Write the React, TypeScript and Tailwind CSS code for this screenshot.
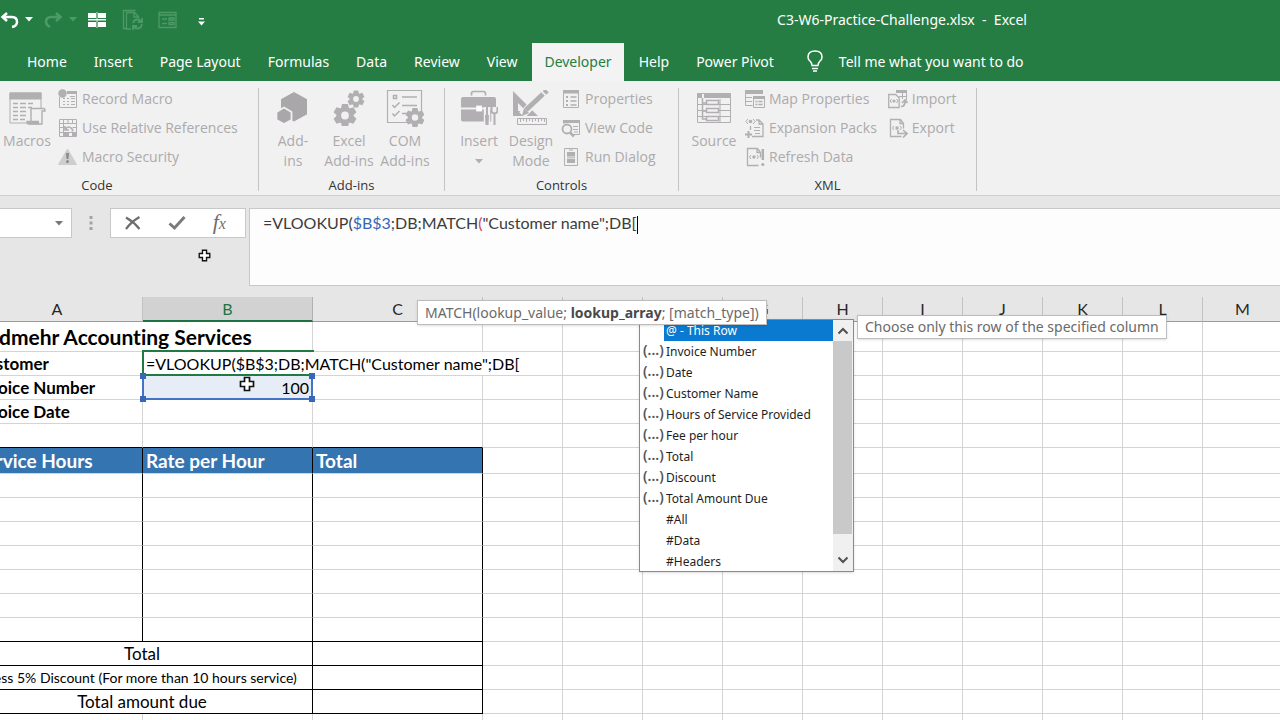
import type { ReactNode } from 'react';

const GRAY = '#b1afb1';
const PAPER = '#f1f1f1';

const TABS = ['Home', 'Insert', 'Page Layout', 'Formulas', 'Data', 'Review', 'View', 'Developer', 'Help', 'Power Pivot'];
const COLUMNS = ['A', 'B', 'C', 'D', 'E', 'F', 'G', 'H', 'I', 'J', 'K', 'L', 'M', 'N'];
const SUGGESTIONS = [
  { label: '@ - This Row', field: false },
  { label: 'Invoice Number', field: true },
  { label: 'Date', field: true },
  { label: 'Customer Name', field: true },
  { label: 'Hours of Service Provided', field: true },
  { label: 'Fee per hour', field: true },
  { label: 'Total', field: true },
  { label: 'Discount', field: true },
  { label: 'Total Amount Due', field: true },
  { label: '#All', field: false },
  { label: '#Data', field: false },
  { label: '#Headers', field: false },
];

/* ---------- icons ---------- */

function Gear({ cx, cy, r }: { cx: number; cy: number; r: number }) {
  return (
    <g transform={`translate(${cx} ${cy}) scale(${r / 10})`}>
      {[0, 60, 120, 180, 240, 300].map((a) => (
        <path key={a} d="M-2.6-10h5.2l1 4.5h-7.2z" transform={`rotate(${a})`} fill={GRAY} />
      ))}
      <circle r="5.4" fill="none" stroke={GRAY} strokeWidth="4" />
    </g>
  );
}

function MacrosIcon() {
  return (
    <svg width="38" height="36" viewBox="0 0 38 36" fill="none">
      <path d="M2 3h31v30H2z" stroke={GRAY} />
      <path d="M1.500 2.500h32v7h-32z" fill={GRAY} />
      <path d="M5 13.500h5m2 0h6m2 0h5M5 17.500h5m2 0h6m2 0h4M5 21.500h5m2 0h6M5 25.500h5m2 0h6M5 29.500h5m2 0h5" stroke={GRAY} strokeWidth="1.300" />
      <path d="M23 33V18.500h12.500q1.500 0 1.500 2.500h-3v13H21q-2 0-2-2.500h12" fill={PAPER} stroke={GRAY} strokeWidth="1.400" />
      <path d="M19 31h12v3.500H21z" fill={GRAY} />
    </svg>
  );
}

function RecordIcon() {
  return (
    <svg width="20" height="20" viewBox="0 0 20 20" fill="none">
      <path d="M1.500 8v10.500h17V3" stroke={GRAY} />
      <path d="M9 2h10v3H9z" fill={GRAY} />
      <path d="M5 9.500h2m2 0h2m2 0h4M5 12.500h2m2 0h2m2 0h4M5 15.500h2m2 0h2m2 0h4M12 7.500h5" stroke={GRAY} />
      <circle cx="4.500" cy="4.500" r="4.200" fill={GRAY} />
    </svg>
  );
}

function RelativeIcon() {
  return (
    <svg width="20" height="20" viewBox="0 0 20 20" fill="none">
      <path d="M1.500 1.500h17v17h-17zM1.500 5.500h17M1.500 9.500h5m8 0h4M1.500 14.500h17M5.500 1.500v17M10 1.500v4M14.500 1.500v4M14.500 14v4" stroke={GRAY} />
      <path d="M6.500 15v3h4v-4" fill={GRAY} stroke={GRAY} />
      <path d="M7 11.500q4-5 7.500 0v2M7 8v4h4" stroke={GRAY} strokeWidth="1.700" />
      <path d="M14 15h4v3h-4z" fill={GRAY} />
    </svg>
  );
}

function WarningIcon() {
  return (
    <svg width="20" height="20" viewBox="0 0 20 20" fill="none">
      <path d="M9.500 2 18.500 17.500H.500z" fill="#cfcdcf" stroke="#cfcdcf" strokeLinejoin="round" />
      <path d="M8 6h3l-.5 6h-2z" fill="#8c8a8c" />
      <circle cx="9.500" cy="14.600" r="1.500" fill="#8c8a8c" />
    </svg>
  );
}

function AddinsIcon() {
  return (
    <svg width="36" height="36" viewBox="0 0 36 36" stroke={PAPER}>
      <path d="M19 1.500 32.500 9v15.500L19 32 5.500 24.500V9z" fill="#a9a7a9" />
      <path d="M9 17.500 16.500 22v8L9 34 1.500 30v-8z" fill="#a9a7a9" strokeWidth="1.800" />
    </svg>
  );
}

function ExcelAddinsIcon() {
  return (
    <svg width="36" height="36" viewBox="0 0 36 36">
      <Gear cx={25} cy={9} r={8.500} />
      <Gear cx={14} cy={25.500} r={11.500} />
    </svg>
  );
}

function ComAddinsIcon() {
  return (
    <svg width="38" height="38" viewBox="0 0 38 38" fill="none">
      <path d="M1.500 1.500h34v32h-34z" stroke={GRAY} strokeWidth="1.200" />
      <path d="M7.500 6.500h3v3h-3zM16 8h15M6.500 16l2 2.500 5-5M16 16.500h15M6.500 24.500l2 2.500 5-5M16 24.500h6" stroke={GRAY} strokeWidth="1.500" />
      <circle cx="29" cy="29" r="8.500" fill={PAPER} />
      <Gear cx={29} cy={28.500} r={9.500} />
    </svg>
  );
}

function ToolboxIcon() {
  return (
    <svg width="38" height="36" viewBox="0 0 38 36" fill="none">
      <path d="M11.500 5.500V3.500q0-2 2-2h10q2 0 2 2v2" stroke={GRAY} strokeWidth="1.700" />
      <path d="M3 7h31q2 0 2 2v8.500H22v-2h-6v2H1V9q0-2 2-2z" fill={GRAY} />
      <path d="M1 19.500h15v2h6v-2h14v12H3q-2 0-2-2z" fill={GRAY} />
      <path d="M17 16.500h5v4.500h-5z" fill="#fff" />
      <path d="M27 17v19M34.500 17v19" stroke={PAPER} strokeWidth="6.500" />
      <path d="M27 17v8" stroke={GRAY} strokeWidth="2" />
      <path d="M25 25h4l-.500 10h-3z" fill={GRAY} />
      <path d="M31.500 17v4q0 2 3 2.500 3-.500 3-2.500v-4M34.500 23v12" stroke={GRAY} strokeWidth="2" />
    </svg>
  );
}

function DesignIcon() {
  return (
    <svg width="38" height="36" viewBox="0 0 38 36" fill="none">
      <path fillRule="evenodd" d="M1 1l25 25H1zM6 13v8h8z" fill={GRAY} />
      <path d="M10 25 34 1" stroke={PAPER} strokeWidth="8" />
      <path d="M14 20 31 4" stroke={GRAY} strokeWidth="5" />
      <path d="M32.500 3l2.500-2.500" stroke={GRAY} strokeWidth="5" />
      <path d="M12 18l5 5-7 3z" fill={GRAY} />
      <path d="M5.500 28.500h29v6h-29z" stroke={GRAY} fill={PAPER} />
      <path d="M8.500 29v3m3-3v2m3-2v3m3-3v2m3-2v3m3-3v2m3-2v3m3-3v2m3-2v3" stroke={GRAY} />
    </svg>
  );
}

function PropertiesIcon() {
  return (
    <svg width="20" height="20" viewBox="0 0 20 20" fill="none">
      <path d="M2.500 1.500h15v17h-15z" stroke={GRAY} />
      <path d="M2 1h16v3.500H2z" fill={GRAY} />
      <path d="M5 7h2v2H5zM5 11h2v2H5zM5 15h2v2H5z" fill={GRAY} />
      <path d="M9.500 8h6M9.500 12h6M9.500 16h6" stroke={GRAY} strokeWidth="1.300" />
    </svg>
  );
}

function ViewCodeIcon() {
  return (
    <svg width="20" height="20" viewBox="0 0 20 20" fill="none">
      <path d="M3 6V2.500h15.500v14H11" stroke={GRAY} />
      <path d="M2 2h17v3H2z" fill={GRAY} />
      <path d="M12 8.500h5m-5 3h5m-4 2.500h4" stroke={GRAY} />
      <circle cx="6" cy="11" r="4.500" stroke={GRAY} strokeWidth="1.800" fill={PAPER} />
      <path d="M9 14.500l4 4" stroke={GRAY} strokeWidth="2.500" />
    </svg>
  );
}

function RunDialogIcon() {
  return (
    <svg width="20" height="20" viewBox="0 0 20 20" fill="none">
      <path d="M3.500 1.500h13v17h-13z" stroke={GRAY} />
      <path d="M6 5h8v4.500H6zM6 12h8v4H6z" fill={GRAY} />
      <path d="M8 3h4M6 10.800h8" stroke={GRAY} />
    </svg>
  );
}

function SourceIcon() {
  return (
    <svg width="36" height="36" viewBox="0 0 36 36" fill="none">
      <path d="M1.500 3.500h33v29h-33zM24 9v24M1 14.500h33M1 20.500h33M1 26.500h33" stroke={GRAY} />
      <path d="M1 3h5v5H1zM8 3h27v5H8z" fill={GRAY} />
      <path d="M6.500 8v21H11M6.500 13H11M6.500 21H11" stroke={GRAY} strokeWidth="1.500" />
      <path d="M10.500 10.500h12v4h-12zM10.500 18.500h12v4h-12zM10.500 26.500h12v4h-12z" fill={PAPER} stroke={GRAY} strokeWidth="1.500" />
    </svg>
  );
}

function MapPropertiesIcon() {
  return (
    <svg width="20" height="20" viewBox="0 0 20 20" fill="none">
      <path d="M.500 1v15.500h7M1 8.500h6m-6 4h6" stroke={GRAY} />
      <path d="M0 1h18v4H0z" fill={GRAY} />
      <path d="M8.500 7.500h11v11h-11z" fill={PAPER} stroke={GRAY} />
      <path d="M8 7h12v3H8z" fill={GRAY} />
      <path d="M10.500 12.500h2m1 0h4m-7 3h2m1 0h4" stroke={GRAY} strokeWidth="1.500" />
    </svg>
  );
}

function ExpansionIcon() {
  return (
    <svg width="20" height="20" viewBox="0 0 20 20" fill="none">
      <path d="M11 2h3l4 4v12.500H7M5.500 8v4M14 2v4h4" stroke={GRAY} strokeWidth="1.300" />
      <path d="M9 9.500h6m-6 3h6m-5 3h5" stroke={GRAY} />
      <path d="M3 1 .800 3.500 3 6M8 1l2.200 2.500L8 6" stroke={GRAY} />
      <circle cx="5.500" cy="3.500" r="1.800" fill={GRAY} />
      <path d="M0 16.500h7M3.500 13v7" stroke={GRAY} strokeWidth="2" />
    </svg>
  );
}

function CodePage({ children }: { children?: ReactNode }) {
  return (
    <svg width="20" height="20" viewBox="0 0 20 20" fill="none">
      <path d="M12.500 1.500h-10v17h11M12.500 1.500l3 4v5M12 1.500v4h3.500" stroke={GRAY} strokeWidth="1.300" />
      <path d="M6 8 4.500 10 6 12M12 8l1.500 2L12 12" stroke={GRAY} />
      <circle cx="9" cy="10" r="1.700" fill={GRAY} />
      {children}
    </svg>
  );
}

function RefreshIcon() {
  return (
    <CodePage>
      <path d="M17.800 2v11" stroke={GRAY} strokeWidth="2.500" />
      <circle cx="17.800" cy="17.500" r="1.600" fill={GRAY} />
    </CodePage>
  );
}

function ExportIcon() {
  return (
    <CodePage>
      <path d="M10 12v3.500h8M15 12l4 3.500-4 4" stroke={GRAY} strokeWidth="1.600" />
    </CodePage>
  );
}

function ImportIcon() {
  return (
    <svg width="20" height="20" viewBox="0 0 20 20" fill="none">
      <path d="M8 1h11v3H8z" fill={GRAY} />
      <path d="M18.500 4v7M11 7.500h7M14.500 4v6" stroke={GRAY} />
      <path d="M.700 5.500h7l3.500 3.500v9.500H.700z" stroke={GRAY} strokeWidth="1.300" />
      <path d="M3.500 10 2.200 12l1.300 2M8.500 10l1.300 2-1.300 2" stroke={GRAY} />
      <circle cx="6" cy="12" r="1.600" fill={GRAY} />
      <path d="M13 17.500q4 0 4-5M14 14l3-3 2.500 3" stroke={GRAY} strokeWidth="1.700" />
    </svg>
  );
}

function CrossCursor({ size }: { size: number }) {
  return (
    <svg width={size} height={size} viewBox="0 0 16 16">
      <path d="M5.500 1.500h5v4h4v5h-4v4h-5v-4h-4v-5h4z" fill="#fff" stroke="#111" strokeWidth="1.700" />
    </svg>
  );
}

function Caret({ color }: { color: string }) {
  return (
    <svg width="8" height="5" viewBox="0 0 8 5">
      <path d="M0 0h8L4 4.500z" fill={color} />
    </svg>
  );
}

/* ---------- ribbon parts ---------- */

function SmallButton({ icon, label }: { icon: ReactNode; label: string }) {
  return (
    <button type="button" className="flex h-[29px] items-center gap-1 whitespace-nowrap">
      {icon}
      {label}
    </button>
  );
}

function BigButton({ icon, lines, className = '' }: { icon: ReactNode; lines: ReactNode[]; className?: string }) {
  return (
    <button type="button" className={'flex flex-col items-center whitespace-nowrap leading-5 ' + className}>
      <span className="flex h-[47px] items-center">{icon}</span>
      {lines.map((line, i) => (
        <span key={i} className="flex h-5 items-center">{line}</span>
      ))}
    </button>
  );
}

function Group({ name, children, className = '' }: { name: string; children: ReactNode; className?: string }) {
  return (
    <section className={'flex shrink-0 flex-col ' + className}>
      <div className="flex h-[91px] items-start">{children}</div>
      <h2 className="text-center text-[13px] leading-5 text-[#333]">{name}</h2>
    </section>
  );
}

function Divider() {
  return <div className="my-1 w-px shrink-0 bg-[#c4c4c4]" />;
}

/* ---------- sheet ---------- */

const cell = 'border-r border-b border-[#d4d4d4] p-0 px-[3px] whitespace-nowrap';
const boxed = 'border-r border-b border-r-black border-b-[#d4d4d4] p-0 px-[3px] whitespace-nowrap';
const totals = 'border-r border-b border-black p-0 px-[3px] whitespace-nowrap';

function Blanks({ count, className = cell }: { count: number; className?: string }) {
  return (
    <>
      {Array.from({ length: count }, (_, i) => (
        <td key={i} className={className} />
      ))}
    </>
  );
}

function Sheet() {
  return (
    <table className="-ml-7 w-0 table-fixed border-separate border-spacing-0 font-[Lato,sans-serif] text-[16px] leading-5 text-black [font-variant-ligatures:none]">
      <colgroup>
        {COLUMNS.map((c, i) => (
          <col key={c} className={i === 0 ? 'w-[171px]' : i < 3 ? 'w-[170px]' : 'w-20'} />
        ))}
      </colgroup>
      <thead>
        <tr className="h-[25px]">
          {COLUMNS.map((c) => (
            <th
              key={c}
              scope="col"
              className={
                c === 'B'
                  ? 'border-r border-b-2 border-r-[#b0b0b0] border-b-[#1f7244] bg-[#d2d2d2] p-0 font-normal text-[#1f7244]'
                  : 'border-r border-b border-r-[#c2c2c2] border-b-[#9b9b9b] bg-[#e6e6e6] p-0 font-normal text-[#262626]'
              }
            >
              {c}
            </th>
          ))}
        </tr>
      </thead>
      <tbody>
        <tr className="h-[30px]">
          <td colSpan={2} className={cell + ' text-[21px] font-bold'}>Radmehr Accounting Services</td>
          <Blanks count={12} />
        </tr>
        <tr className="h-6">
          <td className={cell + ' text-[17px] font-bold'}>Customer</td>
          <td colSpan={3} className={cell + ' relative'}>
            <div className="absolute -top-0.5 -left-px h-[26px] w-[172px] border-t-2 border-b-2 border-l-2 border-[#1f7a43]" />
            =VLOOKUP($B$3;DB;MATCH("Customer name";DB[
          </td>
          <Blanks count={10} />
        </tr>
        <tr className="h-6">
          <td className={cell + ' text-[17px] font-bold'}>Invoice Number</td>
          <td className={cell + ' relative bg-[#e6edf7] text-right'}>
            100
            <div className="absolute -inset-x-px top-0 -bottom-px border-x-2 border-b-2 border-[#4472c4]">
              <i className="absolute -top-[3px] -left-1 size-[6px] bg-[#3866b8]" />
              <i className="absolute -top-[3px] -right-1 size-[6px] bg-[#3866b8]" />
              <i className="absolute -bottom-1 -left-1 size-[6px] bg-[#3866b8]" />
              <i className="absolute -right-1 -bottom-1 size-[6px] bg-[#3866b8]" />
            </div>
          </td>
          <Blanks count={12} />
        </tr>
        <tr className="h-6">
          <td className={cell + ' text-[17px] font-bold'}>Invoice Date</td>
          <Blanks count={13} />
        </tr>
        <tr className="h-6">
          <Blanks count={3} className="border-r border-b border-r-[#d4d4d4] border-b-black p-0" />
          <Blanks count={11} />
        </tr>
        <tr className="h-[26px] text-[19px] font-bold text-white">
          <td className={boxed + ' bg-[#3474b0]'}>Service Hours</td>
          <td className={boxed + ' bg-[#3474b0]'}>Rate per Hour</td>
          <td className={boxed + ' bg-[#3474b0]'}>Total</td>
          <Blanks count={11} />
        </tr>
        {[0, 1, 2, 3, 4, 5].map((r) => (
          <tr key={r} className="h-6">
            <Blanks count={3} className={boxed} />
            <Blanks count={11} />
          </tr>
        ))}
        <tr className="h-6">
          <Blanks count={3} className={totals} />
          <Blanks count={11} />
        </tr>
        <tr className="h-6 text-[17px]">
          <td colSpan={2} className={totals + ' text-center'}>Total</td>
          <td className={totals} />
          <Blanks count={11} />
        </tr>
        <tr className="h-6 text-[14px]">
          <td colSpan={2} className={totals + ' text-center'}>Less 5% Discount (For more than 10 hours service)</td>
          <td className={totals} />
          <Blanks count={11} />
        </tr>
        <tr className="h-6 text-[17px]">
          <td colSpan={2} className={totals + ' text-center'}>Total amount due</td>
          <td className={totals} />
          <Blanks count={11} />
        </tr>
        <tr className="h-6">
          <Blanks count={14} />
        </tr>
      </tbody>
    </table>
  );
}

function Suggestions() {
  return (
    <div className="absolute top-[22px] left-[639px] flex h-[253px] w-[215px] border border-[#8a8a8a] bg-white shadow-sm">
      <ul role="listbox" aria-label="Table columns" className="flex-1 overflow-hidden text-[12px] leading-[21px] text-[#1e1e1e]">
        {SUGGESTIONS.map((s, i) => (
          <li key={s.label} role="option" aria-selected={i === 0} className="flex h-[21px] whitespace-nowrap">
            <span className="w-6 shrink-0 pl-[3px] text-[14px] leading-[18px] font-semibold text-[#555]">{s.field && '(...)'}</span>
            <span className={i === 0 ? 'flex-1 bg-[#0a7ad1] pl-0.5 text-white' : 'flex-1 pl-0.5'}>{s.label}</span>
          </li>
        ))}
      </ul>
      <div className="flex w-5 flex-col bg-[#f0f0f0] pr-px">
        <button type="button" aria-label="Scroll up" className="flex h-[21px] items-center justify-center">
          <svg width="12" height="8" viewBox="0 0 12 8" fill="none" stroke="#505050" strokeWidth="2">
            <path d="M1.500 6.500 6 2l4.500 4.500" />
          </svg>
        </button>
        <div className="flex-1 bg-[#c9c9c9]" />
        <button type="button" aria-label="Scroll down" className="flex h-[37px] items-end justify-center pb-[7px]">
          <svg width="12" height="8" viewBox="0 0 12 8" fill="none" stroke="#505050" strokeWidth="2">
            <path d="M1.500 1.500 6 6l4.500-4.500" />
          </svg>
        </button>
      </div>
    </div>
  );
}

/* ---------- page ---------- */

export default function App() {
  return (
    <div className="flex h-screen flex-col overflow-hidden bg-[#e6e6e6] font-['Noto_Sans','Open_Sans',sans-serif] text-[14px]">
      {/* title bar */}
      <header className="flex h-[43px] shrink-0 items-center bg-[#257d44] pb-1 text-white">
        <div className="flex items-center">
          <button type="button" aria-label="Undo" className="w-[25px]">
            <svg width="20" height="18" viewBox="0 0 20 18" fill="none" stroke="#fff" strokeWidth="2.500">
              <path d="M7 2 2.500 6 7 10M2.500 6H12q5 0 5 5 0 4-5 5" />
            </svg>
          </button>
          <button type="button" aria-label="Undo history" className="w-[18px]"><Caret color="#fff" /></button>
          <button type="button" aria-label="Redo" className="w-[26px]">
            <svg width="20" height="18" viewBox="0 0 20 18" fill="none" stroke="#4d9a66" strokeWidth="2.500">
              <path d="M13 2l4.500 4-4.500 4M17.500 6H8q-5 0-5 5 0 3 4 5" />
            </svg>
          </button>
          <button type="button" aria-label="Redo history" className="w-[19px]"><Caret color="#4d9a66" /></button>
          <button type="button" aria-label="Windows" className="w-[34px]">
            <svg width="18" height="16" viewBox="0 0 18 16" fill="#fff">
              <path d="M0 1h8v5H0zM10 1h8v5h-8zM0 10h8v5H0zM10 10h8v5h-8zM8.600 0h.8v16h-.8z" />
              <path d="M0 7h18v1.500H0z" />
            </svg>
          </button>
          <button type="button" aria-label="Refresh file" className="w-9">
            <svg width="22" height="22" viewBox="0 0 22 22" fill="none" stroke="#4d9a66" strokeWidth="1.300">
              <path d="M4 19.500H1.500v-18h12M9 20H4.500V3.500h8l4 4v2M12 4v4h4" />
              <path d="M11 14q1-3.500 4.500-3.500 2 0 4 2M20 15q-1 4.500-4.500 4.500-2 0-4-2M20 9v4h-4M11 21v-4h4" strokeWidth="1.800" />
            </svg>
          </button>
          <button type="button" aria-label="Form" className="w-10">
            <svg width="20" height="18" viewBox="0 0 20 18" fill="none" stroke="#4d9a66" strokeWidth="1.300">
              <path d="M1 1.500h17v15H1zM1 4h17M4 8h5M4 12.500h5M11 7h5v2h-5zM11 11.500h5v2h-5z" />
            </svg>
          </button>
          <button type="button" aria-label="Customize toolbar" className="w-3 pt-1">
            <svg width="7" height="8" viewBox="0 0 7 8" fill="#fff">
              <path d="M1 0h5v1.500H1zM0 3.500h7L3.500 7.500z" />
            </svg>
          </button>
        </div>
        <h1 className="mr-[253px] ml-auto text-[14px] whitespace-pre">C3-W6-Practice-Challenge.xlsx  -  Excel</h1>
      </header>

      {/* tabs */}
      <nav className="flex h-[38px] shrink-0 gap-[3px] bg-[#257d44] pl-[15px] text-white">
        {TABS.map((t) => (
          <button
            key={t}
            type="button"
            className={
              t === 'Developer'
                ? 'bg-[#f3f3f3] px-3 pb-0.5 whitespace-nowrap text-[#257d44]'
                : 'px-3 pb-0.5 whitespace-nowrap'
            }
          >
            {t}
          </button>
        ))}
        <button type="button" className="ml-[18px] flex items-center gap-4 pb-0.5 whitespace-nowrap">
          <svg width="16" height="22" viewBox="0 0 16 22" fill="none" stroke="#fff" strokeWidth="1.500">
            <path d="M5 15.500q0-2.500-2-4.500-2-1.500-2-4 0-6 7-6t7 6q0 2.500-2 4-2 2-2 4.500zM5 18.500h6M6 21h4" />
          </svg>
          Tell me what you want to do
        </button>
      </nav>

      {/* ribbon */}
      <div className="flex h-[115px] shrink-0 border-b border-[#cfcfcf] bg-[#f1f1f1] pt-[3px] font-['Open_Sans','Noto_Sans',sans-serif] text-[#acaaac]">
        <Group name="Code" className="-ml-16 w-[322px]">
          <BigButton icon={<MacrosIcon />} lines={['Macros']} className="ml-16 w-[54px]" />
          <div className="flex flex-col pl-1">
            <SmallButton icon={<RecordIcon />} label="Record Macro" />
            <SmallButton icon={<RelativeIcon />} label="Use Relative References" />
            <SmallButton icon={<WarningIcon />} label="Macro Security" />
          </div>
        </Group>
        <Divider />
        <Group name="Add-ins" className="w-[185px]">
          <BigButton icon={<AddinsIcon />} lines={['Add-', 'ins']} className="ml-1.5 w-14" />
          <BigButton icon={<ExcelAddinsIcon />} lines={['Excel', 'Add-ins']} className="w-14" />
          <BigButton icon={<ComAddinsIcon />} lines={['COM', 'Add-ins']} className="w-14" />
        </Group>
        <Divider />
        <Group name="Controls" className="w-[233px]">
          <BigButton icon={<ToolboxIcon />} lines={['Insert', <Caret key="caret" color={GRAY} />]} className="ml-2 w-[52px]" />
          <BigButton icon={<DesignIcon />} lines={['Design', 'Mode']} className="w-[52px]" />
          <div className="flex flex-col pl-1">
            <SmallButton icon={<PropertiesIcon />} label="Properties" />
            <SmallButton icon={<ViewCodeIcon />} label="View Code" />
            <SmallButton icon={<RunDialogIcon />} label="Run Dialog" />
          </div>
        </Group>
        <Divider />
        <Group name="XML" className="w-[297px]">
          <BigButton icon={<SourceIcon />} lines={['Source']} className="ml-2 w-[54px]" />
          <div className="flex flex-col pl-1">
            <SmallButton icon={<MapPropertiesIcon />} label="Map Properties" />
            <SmallButton icon={<ExpansionIcon />} label="Expansion Packs" />
            <SmallButton icon={<RefreshIcon />} label="Refresh Data" />
          </div>
          <div className="flex flex-col pl-[11px]">
            <SmallButton icon={<ImportIcon />} label="Import" />
            <SmallButton icon={<ExportIcon />} label="Export" />
          </div>
        </Group>
        <Divider />
      </div>

      {/* formula bar */}
      <div className="relative flex h-[101px] shrink-0 pt-3">
        <div className="flex h-[30px] w-[72px] items-center border-y border-r border-[#c8c8c8] bg-white">
          <input type="text" aria-label="Name box" className="h-full w-[55px] outline-none" />
          <button type="button" aria-label="Named ranges"><Caret color="#777" /></button>
        </div>
        <div className="flex h-[30px] w-[38px] items-center justify-center">
          <svg width="4" height="16" viewBox="0 0 4 16" fill="#a3a3a3">
            <path d="M.500 1h3v3h-3zM.500 6.500h3v3h-3zM.500 12h3v3h-3z" />
          </svg>
        </div>
        <div className="flex h-[30px] w-[136px] items-center justify-around border border-[#c8c8c8] bg-white pr-1.5">
          <button type="button" aria-label="Cancel">
            <svg width="18" height="16" viewBox="0 0 18 16" fill="none" stroke="#6e6e6e">
              <path d="M2 2.500Q10 7 15.500 14" strokeWidth="2.200" />
              <path d="M15.500 2Q7 7 2 14" strokeWidth="2.200" />
            </svg>
          </button>
          <button type="button" aria-label="Enter">
            <svg width="18" height="16" viewBox="0 0 18 16" fill="none" stroke="#7a7a7a" strokeWidth="3">
              <path d="M1.500 8.500 6.500 13 16.500 2" />
            </svg>
          </button>
          <button type="button" aria-label="Insert function" className="font-['Liberation_Serif',serif] text-[22px] leading-6 text-[#6e6e6e] italic">
            f<span className="text-[16px]">x</span>
          </button>
        </div>
        <div
          role="textbox"
          aria-label="Formula"
          contentEditable
          suppressContentEditableWarning
          className="ml-[3px] h-[78px] flex-1 border border-r-0 border-[#c8c8c8] bg-[#fdfdfd] px-[13px] pt-[3px] font-[Lato,sans-serif] text-[16px] leading-[22px] whitespace-nowrap text-[#3c3c3c] outline-none"
        >
          =VLOOKUP(<span className="text-[#3866b8]">$B$3</span>;DB;MATCH<span className="text-[#d0455a]">(</span>"Customer name";DB[
          <span className="ml-px inline-block h-[18px] w-px bg-black align-middle" />
        </div>
        <div className="absolute top-[53px] left-[198px]"><CrossCursor size={13} /></div>
      </div>

      {/* worksheet */}
      <main className="relative flex-1 overflow-hidden bg-white">
        <Sheet />
        <div className="absolute top-[79px] left-[239px]"><CrossCursor size={16} /></div>
        <Suggestions />
        <div role="tooltip" className="absolute top-[3px] left-[417px] border border-[#bdbdbd] bg-white px-[7px] text-[14px] leading-[23px] whitespace-nowrap text-[#6a6a6a] shadow">
          MATCH(lookup_value; <b className="text-[#4a4a4a]">lookup_array</b>; [match_type])
        </div>
        <div role="tooltip" className="absolute top-[18px] left-[857px] border border-[#bdbdbd] bg-white px-[7px] text-[14px] leading-[22px] whitespace-nowrap text-[#6a6a6a] shadow">
          Choose only this row of the specified column
        </div>
      </main>
    </div>
  );
}
